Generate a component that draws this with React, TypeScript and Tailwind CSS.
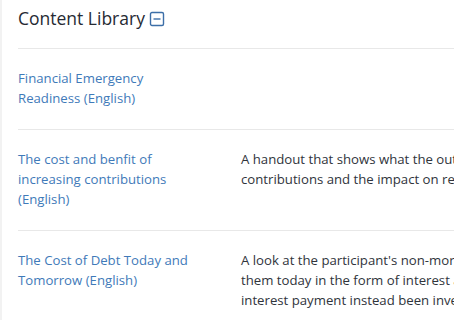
import React from 'react';

const rows = [
    {
        title: 'Financial Emergency Readiness (English)',
        lines: [] as string[],
    },
    {
        title: 'The cost and benfit of increasing contributions (English)',
        lines: [
            'A handout that shows what the out-of-pocket cost is of increasing',
            'contributions and the impact on retirement income.',
        ],
    },
    {
        title: 'The Cost of Debt Today and Tomorrow (English)',
        lines: [
            "A look at the participant's non-mortgage debt and what it costs",
            'them today in the form of interest and what it could be worth had the',
            'interest payment instead been invested for retirement.',
        ],
    },
];

const MinusBox = () => (
    <svg width="16" height="16" viewBox="0 0 16 16" fill="none" className="ml-[4px] mt-[2px]">
        <rect x="1.5" y="1.5" width="13" height="13" rx="1.5" stroke="#3d6fa8" strokeWidth="1.4" />
        <line x1="4.5" y1="8" x2="11.5" y2="8" stroke="#3d6fa8" strokeWidth="1.4" />
    </svg>
);

export default function App() {
    return (
        <div className="w-[454px] h-[320px] overflow-hidden bg-white flex" style={{ fontFamily: '"Open Sans", "Liberation Sans", sans-serif' }}>
            <div className="w-[2px] shrink-0 bg-[#f2f2f2]" />
            <div className="pl-4 pt-[6px] w-[800px] shrink-0">
                <div className="flex items-center h-[24px] mb-[18px]">
                    <h2 className="text-[17.5px] leading-[24px] text-[#262a33]">Content Library</h2>
                    <MinusBox />
                </div>
                {rows.map((row) => (
                    <div key={row.title} className="flex border-t border-[#e8e8e8] pt-[19px] pb-[21px] text-[13.2px] leading-[20px]">
                        <a className="w-[178px] shrink-0 text-[#3f7ab9] cursor-pointer">{row.title}</a>
                        <p className="ml-[45px] text-[#30343b] whitespace-nowrap">
                            {row.lines.map((l, i) => (
                                <React.Fragment key={i}>
                                    {l}
                                    {i < row.lines.length - 1 && <br />}
                                </React.Fragment>
                            ))}
                        </p>
                    </div>
                ))}
            </div>
        </div>
    );
}
